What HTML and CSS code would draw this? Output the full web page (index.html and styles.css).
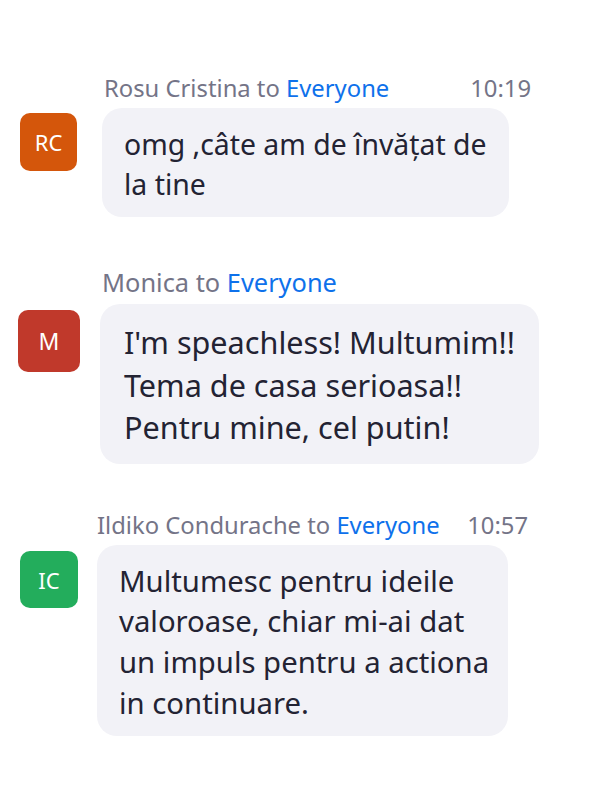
FILE: index.html
```html
<!DOCTYPE html>
<html lang="ro">
<head>
<meta charset="utf-8">
<title>Chat</title>
<link rel="stylesheet" href="styles.css">
</head>
<body>
<div class="chat">
  <div class="msg msg-1">
    <div class="meta">
      <span class="sender">Rosu Cristina to <span class="target">Everyone</span></span>
      <span class="time">10:19</span>
    </div>
    <div class="body">
      <div class="avatar avatar-orange">RC</div>
      <div class="bubble">omg ,câte am de învățat de<br>la tine</div>
    </div>
  </div>
  <div class="msg msg-2">
    <div class="meta">
      <span class="sender">Monica to <span class="target">Everyone</span></span>
    </div>
    <div class="body">
      <div class="avatar avatar-red">M</div>
      <div class="bubble">I'm speachless! Multumim!!<br>Tema de casa serioasa!!<br>Pentru mine, cel putin!</div>
    </div>
  </div>
  <div class="msg msg-3">
    <div class="meta">
      <span class="sender">Ildiko Condurache to <span class="target">Everyone</span></span>
      <span class="time">10:57</span>
    </div>
    <div class="body">
      <div class="avatar avatar-green">IC</div>
      <div class="bubble">Multumesc pentru ideile<br>valoroase, chiar mi-ai dat<br>un impuls pentru a actiona<br>in continuare.</div>
    </div>
  </div>
</div>
</body>
</html>
```

FILE: styles.css
```css
html, body {
  margin: 0;
  padding: 0;
  background: #ffffff;
}

body {
  font-family: "Noto Sans", "Open Sans", sans-serif;
  color: #232333;
  width: 600px;
  height: 800px;
  overflow: hidden;
}

.chat {
  display: flex;
  flex-direction: column;
  padding-top: 74px;
}

.msg {
  display: flex;
  flex-direction: column;
}

.meta {
  display: flex;
  justify-content: space-between;
  align-items: center;
  color: #747487;
  white-space: nowrap;
}

.target {
  color: #0e71eb;
}

.time {
  color: #747487;
}

.body {
  display: flex;
  align-items: flex-start;
}

.avatar {
  flex: none;
  display: flex;
  align-items: center;
  justify-content: center;
  color: #ffffff;
  border-radius: 10px;
}

.avatar-orange { background: #d4560b; }
.avatar-red { background: #c0392b; }
.avatar-green { background: #23ad5c; }

.bubble {
  background: #f2f2f7;
  border-radius: 20px;
  white-space: nowrap;
  box-sizing: border-box;
}

/* message 1 */
.msg-1 .meta {
  margin-left: 104px;
  width: 427px;
  height: 28px;
  font-size: 23.8px;
  margin-bottom: 6px;
}
.msg-1 .avatar {
  margin: 5px 25px 0 20px;
  width: 57px;
  height: 58px;
  font-size: 22px;
}
.msg-1 .bubble {
  width: 407px;
  padding: 16px 0 13px 22px;
  font-size: 28.4px;
  line-height: 40px;
}

/* message 2 */
.msg-2 {
  margin-top: 52px;
}
.msg-2 .meta {
  margin-left: 102px;
  height: 26px;
  font-size: 25.4px;
  margin-bottom: 9px;
}
.msg-2 .avatar {
  margin: 6px 20px 0 18px;
  width: 62px;
  height: 62px;
  font-size: 23px;
}
.msg-2 .bubble {
  width: 439px;
  padding: 17px 0 15.5px 24px;
  font-size: 30.6px;
  line-height: 42.5px;
}

/* message 3 */
.msg-3 {
  margin-top: 47px;
}
.msg-3 .meta {
  margin-left: 97px;
  width: 431px;
  height: 28px;
  font-size: 23.8px;
  margin-bottom: 6px;
}
.msg-3 .avatar {
  margin: 6px 19px 0 20px;
  width: 58px;
  height: 57px;
  font-size: 22px;
}
.msg-3 .bubble {
  width: 411px;
  padding: 15.5px 0 12.5px 22px;
  font-size: 29.3px;
  line-height: 40.7px;
}
```
